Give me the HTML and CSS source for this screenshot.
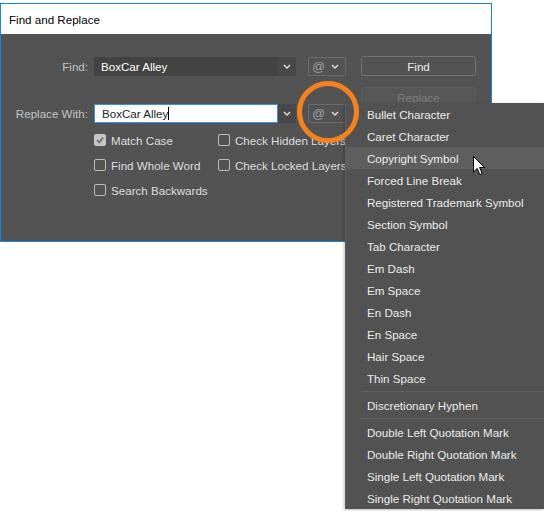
FILE: index.html
```html
<!DOCTYPE html>
<html lang="en">
<head>
<meta charset="UTF-8">
<meta name="viewport" content="width=device-width, initial-scale=1.0">
<title>Find and Replace</title>
<link rel="stylesheet" href="styles.css">
</head>
<body>
<div class="dialog">
    <div class="titlebar">Find and Replace</div>
    <div class="dialog-body">
        <div class="form">
            <div class="row">
                <label class="label">Find:</label>
                <div class="combo">
                    <div class="field field-dark">BoxCar Alley</div>
                    <div class="arrow"><svg width="8" height="5" viewBox="0 0 8 5"><path d="M1 1 L4 4 L7 1" fill="none" stroke="#e0e0e0" stroke-width="1.4"/></svg></div>
                </div>
                <div class="special"><span class="at">@</span><svg width="8" height="5" viewBox="0 0 8 5"><path d="M1 1 L4 4 L7 1" fill="none" stroke="#e0e0e0" stroke-width="1.4"/></svg></div>
            </div>
            <div class="row row-replace">
                <label class="label">Replace With:</label>
                <div class="combo">
                    <div class="field field-light">BoxCar Alley<span class="caret"></span></div>
                    <div class="arrow"><svg width="8" height="5" viewBox="0 0 8 5"><path d="M1 1 L4 4 L7 1" fill="none" stroke="#e0e0e0" stroke-width="1.4"/></svg></div>
                </div>
                <div class="special"><span class="at">@</span><svg width="8" height="5" viewBox="0 0 8 5"><path d="M1 1 L4 4 L7 1" fill="none" stroke="#e0e0e0" stroke-width="1.4"/></svg></div>
            </div>
            <div class="options">
                <div class="option"><span class="box checked"><svg width="10" height="10" viewBox="0 0 10 10"><path d="M2 5 L4.2 7.4 L8 2.6" fill="none" stroke="#6e6e6e" stroke-width="1.8"/></svg></span>Match Case</div>
                <div class="option"><span class="box"></span>Check Hidden Layers</div>
                <div class="option"><span class="box"></span>Find Whole Word</div>
                <div class="option"><span class="box"></span>Check Locked Layers</div>
                <div class="option"><span class="box"></span>Search Backwards</div>
            </div>
        </div>
        <div class="actions">
            <button class="button">Find</button>
            <button class="button button-off">Replace</button>
        </div>
    </div>
</div>

<ul class="menu">
    <li>Bullet Character</li>
    <li>Caret Character</li>
    <li class="hover">Copyright Symbol</li>
    <li>Forced Line Break</li>
    <li>Registered Trademark Symbol</li>
    <li>Section Symbol</li>
    <li>Tab Character</li>
    <li>Em Dash</li>
    <li>Em Space</li>
    <li>En Dash</li>
    <li>En Space</li>
    <li>Hair Space</li>
    <li>Thin Space</li>
    <li class="sep"></li>
    <li>Discretionary Hyphen</li>
    <li class="sep"></li>
    <li>Double Left Quotation Mark</li>
    <li>Double Right Quotation Mark</li>
    <li>Single Left Quotation Mark</li>
    <li>Single Right Quotation Mark</li>
</ul>

<div class="ring"></div>

<svg class="pointer" width="13" height="20" viewBox="0 0 13 20">
    <path d="M0.5 0.5 L0.5 16 L4.2 12.4 L6.8 18.5 L9.2 17.5 L6.6 11.5 L11.5 11.5 Z" fill="#fff" stroke="#000" stroke-width="1"/>
</svg>
</body>
</html>
```

FILE: styles.css
```css
body {
    margin: 0;
    background-color: #fff;
    font-family: 'Liberation Sans', Arial, sans-serif;
    font-size: 11.6px;
}
.dialog {
    margin-top: 3px;
    width: 490px;
    height: 237px;
    border: 1px solid #1a84d9;
    display: flex;
    flex-direction: column;
}
.titlebar {
    height: 30px;
    line-height: 31px;
    padding-left: 8px;
    background-color: #fff;
    color: #000;
}
.dialog-body {
    flex: 1;
    background-color: #535353;
    display: flex;
    padding-top: 22px;
}
.form {
    width: 345px;
}
.row {
    display: flex;
    align-items: center;
    height: 20px;
}
.row-replace {
    margin-top: 27px;
}
.label {
    width: 87px;
    margin-right: 6px;
    text-align: right;
    color: #c4c4c4;
}
.combo {
    display: flex;
    width: 202px;
    height: 19px;
}
.field {
    flex: 1;
    line-height: 17px;
    padding-left: 6px;
    border: 1px solid transparent;
}
.field-dark {
    background-color: #434343;
    border-color: #434343;
    color: #fff;
}
.field-light {
    background-color: #fff;
    border-color: #3b8ee8;
    color: #1e1e1e;
    padding-left: 7px;
}
.caret {
    display: inline-block;
    width: 1px;
    height: 13px;
    background-color: #000;
    vertical-align: -2px;
}
.arrow {
    width: 18px;
    background-color: #484848;
    display: flex;
    align-items: center;
    justify-content: center;
}
.special {
    margin-left: 12px;
    width: 38px;
    height: 19px;
    border: 1px solid #6b6b6b;
    border-radius: 2px;
    display: flex;
    align-items: center;
    justify-content: space-between;
    padding: 0 6px 0 3px;
    box-sizing: border-box;
}
.at {
    color: #9c9c9c;
    font-size: 13px;
}
.options {
    margin: 11px 0 0 93px;
    display: grid;
    grid-template-columns: 124px auto;
    grid-template-rows: repeat(3, 12px);
    row-gap: 13px;
}
.option {
    display: flex;
    align-items: center;
    color: #dedede;
    white-space: nowrap;
}
.box {
    width: 10px;
    height: 10px;
    border: 1px solid #bdbdbd;
    border-radius: 2px;
    margin-right: 5px;
    display: flex;
    align-items: center;
    justify-content: center;
}
.box.checked {
    background-color: #c6c6c6;
    border-color: #c6c6c6;
}
.actions {
    margin-left: 15px;
    display: flex;
    flex-direction: column;
    gap: 11px;
}
.button {
    width: 115px;
    height: 20px;
    font-family: inherit;
    font-size: 11.6px;
    color: #ececec;
    background-color: #535353;
    border: 1px solid #747474;
    border-radius: 3px;
    padding: 1px 0 0;
}
.button-off {
    color: #7c7c7c;
    background-color: #575757;
    border-color: #5c5c5c;
}
.menu {
    position: absolute;
    left: 345px;
    top: 103px;
    width: 199px;
    height: 406px;
    margin: 0;
    padding: 0;
    list-style: none;
    background-color: #525252;
    border-left: 1px solid #5d5d5d;
    box-sizing: border-box;
    box-shadow: -1px 1px 3px rgba(0, 0, 0, 0.25);
}
.menu li {
    height: 22px;
    line-height: 23px;
    padding-left: 21px;
    color: #ececec;
    white-space: nowrap;
}
.menu li.hover {
    background-color: #5e5e5e;
}
.menu li.sep {
    height: 1px;
    margin: 2px 0 2px 15px;
    padding: 0;
    background-color: #606060;
}
.ring {
    position: absolute;
    left: 297px;
    top: 81px;
    width: 52px;
    height: 52px;
    border: 5px solid #f5821f;
    border-radius: 50%;
}
.pointer {
    position: absolute;
    left: 473px;
    top: 156px;
}
```
